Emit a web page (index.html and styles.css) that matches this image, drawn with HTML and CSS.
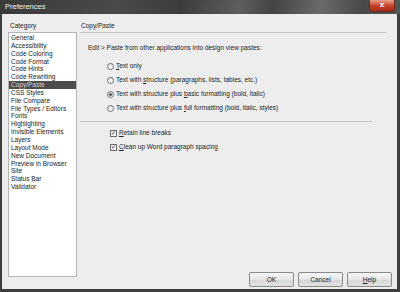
FILE: index.html
```html
<!DOCTYPE html>
<html lang="en">
<head>
  <meta charset="UTF-8">
  <title>Preferences</title>
  <link rel="stylesheet" href="styles.css">
</head>
<body>
  <div class="window">
    <div class="titlebar">
      <span class="title">Preferences</span>
      <span class="close">x</span>
    </div>
    <div class="client">
      <div class="category">
        <div class="label">Category</div>
        <ul class="category-list">
          <li>General</li>
          <li>Accessibility</li>
          <li>Code Coloring</li>
          <li>Code Format</li>
          <li>Code Hints</li>
          <li>Code Rewriting</li>
          <li class="selected">Copy/Paste</li>
          <li>CSS Styles</li>
          <li>File Compare</li>
          <li>File Types / Editors</li>
          <li>Fonts</li>
          <li>Highlighting</li>
          <li>Invisible Elements</li>
          <li>Layers</li>
          <li>Layout Mode</li>
          <li>New Document</li>
          <li>Preview in Browser</li>
          <li>Site</li>
          <li>Status Bar</li>
          <li>Validator</li>
        </ul>
      </div>
      <div class="panel">
        <div class="panel-title">Copy/Paste</div>
        <div class="intro">Edit &gt; Paste from other applications into design view pastes:</div>
        <div class="options">
          <label class="option"><span class="radio"></span><span><u>T</u>ext only</span></label>
          <label class="option"><span class="radio"></span><span>Text with <u>s</u>tructure (paragraphs, lists, tables, etc.)</span></label>
          <label class="option"><span class="radio checked"></span><span>Text with structure plus <u>b</u>asic formatting (bold, italic)</span></label>
          <label class="option"><span class="radio"></span><span>Text with structure plus <u>f</u>ull formatting (bold, italic, styles)</span></label>
        </div>
        <div class="separator"></div>
        <div class="checks">
          <label class="option"><span class="checkbox">&#10003;</span><span><u>R</u>etain line breaks</span></label>
          <label class="option"><span class="checkbox">&#10003;</span><span><u>C</u>lean up Word paragraph spacing</span></label>
        </div>
        <div class="buttons">
          <button class="btn">OK</button>
          <button class="btn">Cancel</button>
          <button class="btn"><u>H</u>elp</button>
        </div>
      </div>
    </div>
  </div>
</body>
</html>
```

FILE: styles.css
```css
body {
  margin: 0;
  padding: 0;
  font-family: "Liberation Sans", Arial, sans-serif;
  font-size: 6.5px;
  color: #222;
}
.window {
  width: 400px;
  height: 292px;
  background-color: #3e3e3e;
  display: flex;
  flex-direction: column;
}
.titlebar {
  height: 14px;
  display: flex;
  align-items: flex-start;
  justify-content: space-between;
  background: linear-gradient(100deg, #3a3a3a 0%, #4a4a4a 30%, #3c3c3c 45%, #5e5e5e 60%, #444 68%, #6a6a6a 80%, #4a4a4a 90%, #555 100%);
}
.title {
  color: #f4f4f4;
  font-size: 7.5px;
  line-height: 14px;
  padding-left: 5px;
}
.close {
  width: 26px;
  height: 12px;
  margin-right: 5px;
  background: linear-gradient(#e8a08c, #c7442b 50%, #a52a18);
  border: 1px solid #6a2a20;
  border-top: none;
  border-radius: 0 0 3px 3px;
  box-sizing: border-box;
  color: #fff;
  font-size: 8px;
  font-weight: bold;
  text-align: center;
  line-height: 10px;
}
.client {
  flex: 1;
  margin: 0 3px 3px 2px;
  background-color: #ededed;
  display: flex;
  gap: 3px;
  padding: 8px 10px 2px 6px;
}
.category {
  width: 69px;
}
.label {
  line-height: 8px;
  padding-left: 2px;
  margin-bottom: 2px;
}
.category-list {
  list-style: none;
  margin: 0;
  padding: 1px 0 0 0;
  height: 245px;
  box-sizing: border-box;
  background-color: #fff;
  border: 1px solid #b5b5b5;
}
.category-list li {
  line-height: 7.85px;
  padding-left: 2px;
  white-space: nowrap;
}
.category-list li.selected {
  background-color: #4c4c4c;
  color: #d8d8d8;
}
.panel {
  flex: 1;
  display: flex;
  flex-direction: column;
}
.panel-title {
  line-height: 8px;
  padding: 0 0 2px 1px;
  border-bottom: 1px solid #c4c4c4;
}
.intro {
  line-height: 8px;
  margin-top: 11px;
  padding-left: 8px;
}
.options {
  display: flex;
  flex-direction: column;
  gap: 6px;
  margin-top: 10px;
  padding-left: 27px;
}
.option {
  display: flex;
  align-items: center;
  gap: 2px;
  line-height: 8px;
  white-space: nowrap;
}
.radio {
  width: 7px;
  height: 7px;
  box-sizing: border-box;
  border: 1px solid #6e6e6e;
  border-radius: 50%;
  background: linear-gradient(#e2e2e2, #fff);
  display: flex;
  align-items: center;
  justify-content: center;
}
.radio.checked::after {
  content: "";
  width: 3px;
  height: 3px;
  border-radius: 50%;
  background-color: #555;
}
.separator {
  height: 1px;
  background-color: #c4c4c4;
  margin: 9px 15px 0 0;
}
.checks {
  display: flex;
  flex-direction: column;
  gap: 6px;
  margin-top: 7px;
  padding-left: 30px;
}
.checkbox {
  width: 7px;
  height: 7px;
  box-sizing: border-box;
  border: 1px solid #6e6e6e;
  background: linear-gradient(#e4e4e4, #fff);
  font-size: 6px;
  line-height: 5px;
  text-align: center;
  color: #333;
}
.buttons {
  margin-top: auto;
  margin-right: -5px;
  display: flex;
  justify-content: flex-end;
  gap: 4px;
}
.btn {
  width: 45px;
  height: 15px;
  padding: 0;
  font-family: "Liberation Sans", Arial, sans-serif;
  font-size: 6.5px;
  color: #222;
  background: linear-gradient(#f6f6f6, #e6e6e6 50%, #d6d6d6 51%, #e2e2e2);
  border: 1px solid #8a8a8a;
  border-radius: 2px;
}
```
